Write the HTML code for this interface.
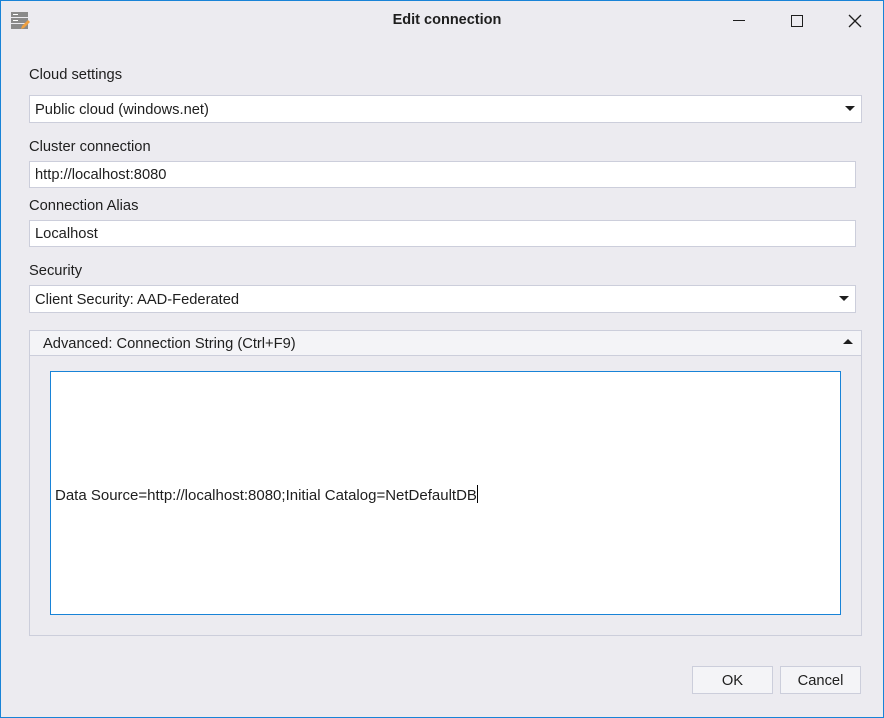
<!DOCTYPE html>
<html><head><style>
*{box-sizing:border-box;margin:0;padding:0}
body{width:884px;height:718px;background:#ecebf0;font-family:"Liberation Sans",sans-serif;font-size:14.7px;color:#1e1e1e;position:relative;overflow:hidden}
.win{position:absolute;left:0;top:0;width:884px;height:718px;border:1px solid #1883d7}
.a{position:absolute;white-space:nowrap}
.box{position:absolute;background:#fff;border:1px solid #cccedb;padding-left:5px;line-height:29px}
.dd::after{content:"";position:absolute;right:6px;top:10px;border-left:5px solid transparent;border-right:5px solid transparent;border-top:5px solid #1e1e1e}
.btn{position:absolute;background:#f4f4f7;border:1px solid #cccedb;text-align:center;line-height:28px}
</style></head><body>
<div class="win"></div>
<svg class="a" style="left:10px;top:11px" width="20" height="20" viewBox="0 0 20 20">
<rect x="1" y="1" width="17" height="5" fill="#8a8a8a"/><rect x="3" y="3" width="5" height="1" fill="#fff"/>
<rect x="1" y="7" width="17" height="5" fill="#8a8a8a"/><rect x="3" y="9" width="5" height="1" fill="#fff"/>
<rect x="1" y="13" width="17" height="5" fill="#8a8a8a"/>
<path d="M11 18 L12 15 L18 9 L20 11 L14 17 Z" fill="#f0a040"/>
</svg>
<div class="a" style="left:0;width:894px;top:12px;text-align:center;font-weight:bold;font-size:14.5px">Edit connection</div>
<div class="a" style="left:733px;top:20px;width:12px;height:1px;background:#1e1e1e"></div>
<div class="a" style="left:791px;top:15px;width:12px;height:12px;border:1px solid #1e1e1e"></div>
<svg class="a" style="left:848px;top:14px" width="14" height="14"><path d="M1 1L13 13M13 1L1 13" stroke="#1e1e1e" stroke-width="1.3"/></svg>

<div class="a" style="left:29px;top:67px">Cloud settings</div>
<div class="box dd" style="left:29px;top:95px;width:833px;height:28px">Public cloud (windows.net)</div>
<div class="a" style="left:29px;top:139px">Cluster connection</div>
<div class="box" style="left:29px;top:161px;width:827px;height:27px;line-height:27px">http://localhost:8080</div>
<div class="a" style="left:29px;top:198px">Connection Alias</div>
<div class="box" style="left:29px;top:220px;width:827px;height:27px;line-height:27px">Localhost</div>
<div class="a" style="left:29px;top:263px">Security</div>
<div class="box dd" style="left:29px;top:285px;width:827px;height:28px">Client Security: AAD-Federated</div>

<div class="a" style="left:29px;top:330px;width:833px;height:306px;border:1px solid #cccedb"></div>
<div class="a" style="left:30px;top:331px;width:831px;height:25px;background:#f4f4f7;border-bottom:1px solid #cccedb;padding-left:13px;line-height:26px">Advanced: Connection String (Ctrl+F9)</div>
<div class="a" style="left:843px;top:339px;border-left:5px solid transparent;border-right:5px solid transparent;border-bottom:5px solid #1e1e1e"></div>
<div class="a" style="left:50px;top:371px;width:791px;height:244px;background:#fff;border:1px solid #1883d7"></div>
<div class="a" style="left:55px;top:485px;font-size:15px">Data Source=http://localhost:8080;Initial Catalog=NetDefaultDB<span style="display:inline-block;width:1px;height:18px;background:#000;vertical-align:-3px"></span></div>

<div class="btn" style="left:692px;top:666px;width:81px;height:28px">OK</div>
<div class="btn" style="left:780px;top:666px;width:81px;height:28px">Cancel</div>
</body></html>
